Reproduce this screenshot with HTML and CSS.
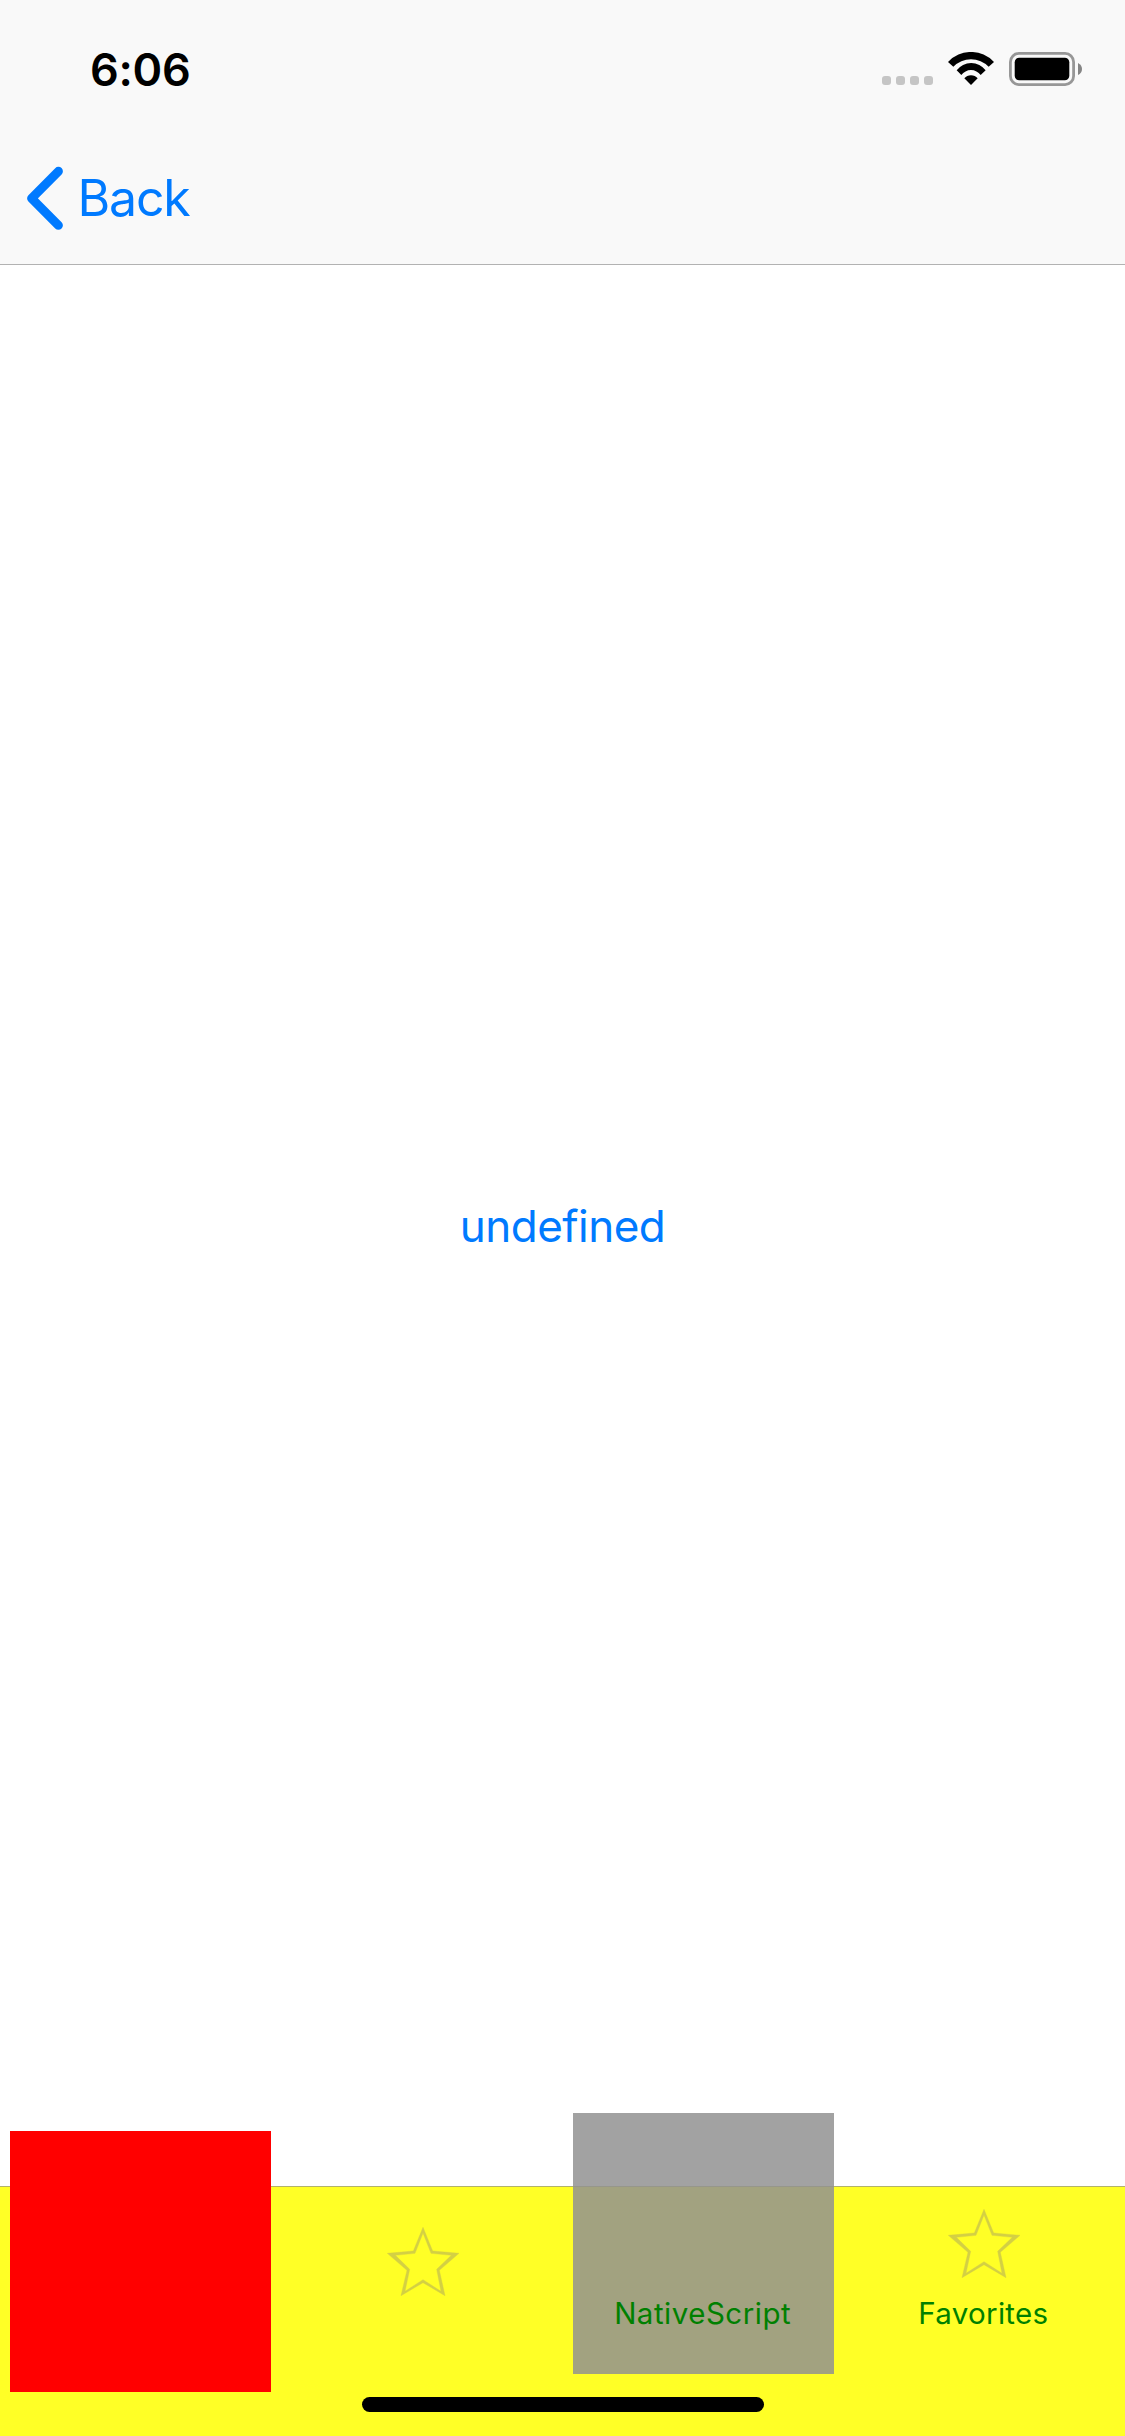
FILE: index.html
```html
<!DOCTYPE html>
<html lang="en">
<head>
<meta charset="utf-8">
<title>Tabs</title>
<link rel="stylesheet" href="styles.css">
</head>
<body>
<header class="header">
  <div class="status">
    <span class="time">6:06</span>
    <div class="indicators">
      <div class="signal"><i class="dot"></i><i class="dot"></i><i class="dot"></i><i class="dot"></i></div>
      <svg class="wifi" viewBox="264 66 138 99">
        <path d="M264 96A94 94 0 0 1 402 96L386 110A74 74 0 0 0 280 110Z"/>
        <path d="M290 121A54 54 0 0 1 377 121L362 135A36 36 0 0 0 304 135Z"/>
        <path d="M313 145A26 26 0 0 1 353 145L333 165Z"/>
      </svg>
      <svg class="battery" viewBox="0 0 73 34">
        <rect x="1.4" y="1.4" width="63.2" height="31.2" rx="8.5" fill="none" stroke="#979797" stroke-width="2.8"/>
        <rect x="5.7" y="5.7" width="54.6" height="22.6" rx="4.5"/>
        <path d="M69 11Q73 13 73 17T69 23Z" fill="#858585"/>
      </svg>
    </div>
  </div>
  <nav class="nav">
    <a class="back">
      <svg class="chevron" viewBox="26 166 38 65"><path d="M58.4 171.3L31.6 198.3L58.4 225.3"/></svg>
      <span class="back-label">Back</span>
    </a>
  </nav>
</header>
<main class="content"><span class="link">undefined</span></main>
<footer class="tabbar">
  <div class="tabs">
    <div class="tab"><div class="square red"></div></div>
    <div class="tab tab-icon">
      <svg class="star" viewBox="141 171 216 207"><path d="M249 172L278 243L357 250L298 301L315 377L249 338L183 377L201 301L142 250L220 243ZM249 189L225 250L166 256L209 298L195 364L249 329L303 364L290 298L334 256L273 250Z"/></svg>
    </div>
    <div class="tab"><div class="square gray"><span class="label">NativeScript</span></div></div>
    <div class="tab tab-full">
      <svg class="star" viewBox="141 171 216 207"><path d="M249 172L278 243L357 250L298 301L315 377L249 338L183 377L201 301L142 250L220 243ZM249 189L225 250L166 256L209 298L195 364L249 329L303 364L290 298L334 256L273 250Z"/></svg>
      <span class="label favorites">Favorites</span>
    </div>
  </div>
  <div class="home"></div>
</footer>
</body>
</html>
```
FILE: styles.css
```css
* { box-sizing: border-box; }
body {
  margin: 0;
  width: 1125px;
  height: 2436px;
  display: flex;
  flex-direction: column;
  overflow: hidden;
  background: #fff;
  font-family: Inter, "Liberation Sans", sans-serif;
}
svg { display: block; flex: none; }
.header {
  height: 265px;
  background: #f9f9f9;
  border-bottom: 1px solid #b2b2b2;
}
.status {
  height: 132px;
  padding: 6px 43px 0 90px;
  display: flex;
  justify-content: space-between;
  align-items: center;
}
.time { font-size: 45px; font-weight: 600; line-height: 54px; letter-spacing: -0.3px; padding-top: 1px; }
.indicators { display: flex; align-items: flex-end; height: 34px; }
.signal { display: flex; gap: 5px; margin: 0 15px 1px 0; }
.dot { width: 9px; height: 9px; border-radius: 3px; background: #c5c5c5; }
.wifi { width: 46px; height: 33px; margin: 0 15px 1px 0; }
.battery { width: 73px; height: 34px; }
.nav { height: 132px; padding-left: 26px; display: flex; align-items: center; }
.back { display: flex; align-items: center; color: #007aff; }
.chevron { width: 38px; height: 65px; fill: none; stroke: #007aff; stroke-width: 9; stroke-linecap: round; stroke-linejoin: round; }
.back-label { margin-left: 13.5px; font-size: 50px; line-height: 60px; letter-spacing: -1.2px; }
.content { flex: 1; display: flex; align-items: center; justify-content: center; }
.link { color: #007aff; font-size: 44px; line-height: 54px; letter-spacing: -0.5px; }
.tabbar {
  height: 250px;
  background: #ffff26;
  border-top: 1px solid #b2b26a;
  display: flex;
  flex-direction: column;
  align-items: center;
}
.tabs { width: 100%; height: 210px; display: grid; grid-template-columns: repeat(4, 1fr); }
.tab { display: flex; flex-direction: column; align-items: center; }
.tab-icon { padding: 40px 0 0 2px; }
.tab-full { padding-top: 22px; }
.star { width: 72px; height: 69px; fill: #d3d044; stroke: #d3d044; stroke-width: 1.2; }
.square { width: 261px; height: 261px; flex: none; }
.red { margin-top: -56px; background: #f00; }
.gray {
  margin-top: -74px;
  background: rgba(145, 145, 145, 0.843);
  display: flex;
  justify-content: center;
  padding: 182px 1px 0 0;
}
.label { color: #008000; font-size: 29.5px; line-height: 36px; letter-spacing: 0.5px; }
.favorites { margin: 17px 2px 0 0; letter-spacing: 0.3px; }
.home { width: 402px; height: 15px; border-radius: 8px; background: #000; }
```
